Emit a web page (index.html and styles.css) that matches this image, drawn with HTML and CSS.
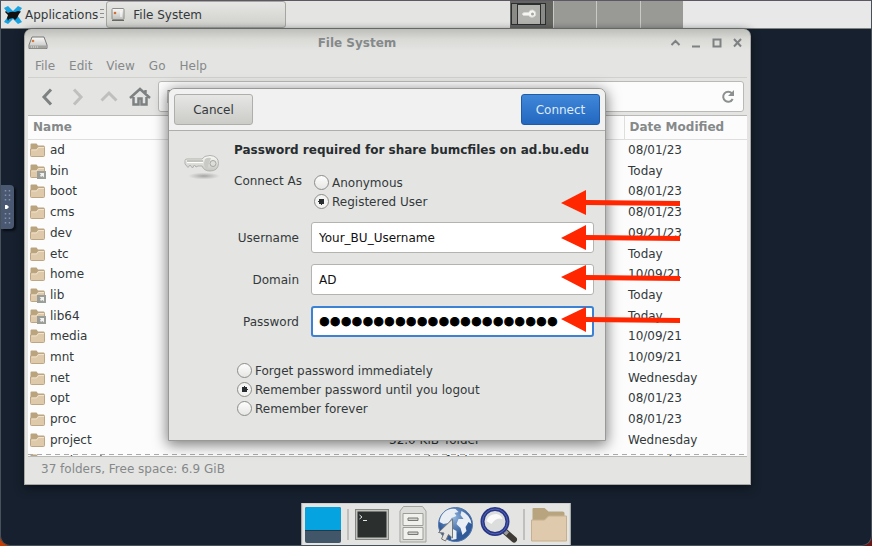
FILE: index.html
```html
<!DOCTYPE html>
<html lang="en">
<head>
<meta charset="utf-8">
<title>File System</title>
<link rel="stylesheet" href="styles.css">
</head>
<body>
<svg class="defs" width="0" height="0" aria-hidden="true">
  <defs>
    <linearGradient id="gDrive" x1="0" y1="0" x2="0" y2="1"><stop offset="0" stop-color="#fafafa"/><stop offset="1" stop-color="#bdbdba"/></linearGradient>
    <linearGradient id="gKey" x1="0" y1="0" x2="0" y2="1"><stop offset="0" stop-color="#fafaf8"/><stop offset="1" stop-color="#c4c4c0"/></linearGradient>
    <radialGradient id="gShade"><stop offset="0" stop-color="#777" stop-opacity=".6"/><stop offset="1" stop-color="#888" stop-opacity="0"/></radialGradient>
    <radialGradient id="gGlobe" cx=".45" cy=".3"><stop offset="0" stop-color="#8fb3dc"/><stop offset="1" stop-color="#315a99"/></radialGradient>
    <symbol id="folder" viewBox="0 0 16 16">
      <path d="M.5 13V2.500Q.5 1.500 1.500 1.500H6.500L8 3.500H13.500Q14.500 3.500 14.500 4.500V13Z" fill="#b9a47e"/>
      <path d="M.5 7H6L8 4.500H14Q14.500 4.500 14.500 5.500V13.500Q14.500 14.500 13.500 14.500H1.500Q.5 14.500 .5 13.500Z" fill="#dfc9ab" stroke="#bda684"/>
      <path d="M1.500 8H6.500L8.500 5.500H14" fill="none" stroke="#f0e2cc"/>
    </symbol>
    <symbol id="linked" viewBox="0 0 16 16">
      <use href="#folder" width="16" height="16"/>
      <rect x="7" y="8" width="9" height="8" fill="#9b9d98"/>
      <path d="M9.500 10H14V14.500L12.500 13L11 14L10 12.500L11 11.500Z" fill="#f1f1ef"/>
    </symbol>
    <symbol id="drive" viewBox="0 0 20 14">
      <path d="M4 1H16L19 9V12.500H1V9Z" fill="url(#gDrive)" stroke="#777975"/>
      <path d="M1.500 9.500H18.500V12.500H1.500Z" fill="#a3a4a0"/>
      <path d="M3 11H11" stroke="#e4e4e4" stroke-dasharray="1 1"/>
      <circle cx="5" cy="5" r="1.300" fill="#d57a3a"/>
    </symbol>
  </defs>
</svg>

<div class="desktop">
  <header class="panel">
    <button class="apps" type="button">
      <svg class="apps-logo" width="20" height="20" viewBox="0 0 20 20">
        <path d="M1 3L5 1L10 6L15 1L19 3L14 10L19 17L15 19L10 14L5 19L1 17L6 10Z" fill="#16a3e0"/>
        <path d="M3 6L5 8Q8 6 12 7L15 6L18 6.500L16 9L14 13L12 15L10 13L6 14L5 16L4 13L5 10L2 7Z" fill="#111"/>
      </svg>
      <span>Applications</span>
    </button>
    <span class="grip"></span>
    <button class="task" type="button">
      <svg width="14" height="14" viewBox="0 0 14 14"><rect x="1" y=".5" width="12" height="11" rx="1" fill="url(#gDrive)" stroke="#8c8c88"/><path d="M1 12.500H13" stroke="#666"/><path d="M10 3V9" stroke="#fff"/><circle cx="4" cy="5" r="1.300" fill="#cf6f36"/></svg>
      <span>File System</span>
    </button>
    <span class="fill"></span>
    <div class="pager">
      <span class="space current">
        <svg width="38" height="27" viewBox="0 0 38 27">
          <rect x="1.500" y="2.500" width="34" height="21" fill="#8a8a86" stroke="#2c2f31"/>
          <rect x="7.500" y="3.500" width="23" height="20" fill="#b2b2ae" stroke="#2c2f31"/>
          <path d="M12 13L14 11.500H18.500Q20 8.500 22.500 9Q26.500 10 25.500 14.500Q22 18 18.500 14.500L13.500 14.500Z" fill="#f5f5f2" stroke="#d9d9d5"/>
          <circle cx="22.500" cy="13" r="1.500" fill="#a5a5a0"/>
        </svg>
      </span>
      <span class="space"></span><span class="space"></span><span class="space"></span>
    </div>
    <span class="tray"></span>
  </header>

  <section class="window">
    <div class="titlebar">
      <svg width="20" height="14"><use href="#drive" width="20" height="14"/></svg>
      <h1>File System</h1>
      <svg class="controls" width="72" height="12" viewBox="0 0 72 12" fill="none" stroke="#7d8182" stroke-width="2">
        <path d="M1.500 8L5.500 4L9.500 8M22 9.500H30M43.500 2.500H50.500V9.500H43.500ZM64 2L71 9.500M71 2L64 9.500"/>
      </svg>
    </div>
    <nav class="menubar">
      <button type="button">File</button><button type="button">Edit</button><button type="button">View</button><button type="button">Go</button><button type="button">Help</button>
    </nav>
    <div class="toolbar">
      <button type="button" aria-label="Back"><svg width="22" height="20" viewBox="0 0 22 20"><path d="M15 2.500L8 10L15 17.500" fill="none" stroke="#7d8182" stroke-width="3"/></svg></button>
      <button type="button" aria-label="Forward"><svg width="22" height="20" viewBox="0 0 22 20"><path d="M7 2.500L14 10L7 17.500" fill="none" stroke="#bfc0bd" stroke-width="3"/></svg></button>
      <button type="button" aria-label="Up"><svg width="22" height="20" viewBox="0 0 22 20"><path d="M3.500 13.500L11 6L18.500 13.500" fill="none" stroke="#bfc0bd" stroke-width="3"/></svg></button>
      <button type="button" aria-label="Home"><svg width="22" height="20" viewBox="0 0 22 20"><path d="M1 11L11 2L21 11M16.500 3V7M4.500 10V17.500H9.500V11.500H12.500V17.500H17.500V10" fill="none" stroke="#7d8182" stroke-width="2.500"/></svg></button>
      <div class="location">
        <svg width="14" height="14" viewBox="0 0 14 14"><rect x="1" y=".5" width="12" height="12" fill="url(#gDrive)" stroke="#8c8c88"/></svg>
        <svg width="14" height="14" viewBox="0 0 14 14"><path d="M11 3.500A5 5 0 1 0 11.700 9" fill="none" stroke="#8d9090" stroke-width="2"/><path d="M13 0V6H7Z" fill="#8d9090"/></svg>
      </div>
    </div>
    <div class="list">
      <table>
        <colgroup><col class="c-name"><col class="c-size"><col class="c-type"><col class="c-date"></colgroup>
        <thead><tr><th>Name</th><td></td><td></td><th>Date Modified</th></tr></thead>
        <tbody>
          <tr><td><span class="file"><svg><use href="#folder"/></svg>ad</span></td><td></td><td></td><td>08/01/23</td></tr>
          <tr><td><span class="file"><svg><use href="#linked"/></svg>bin</span></td><td></td><td></td><td>Today</td></tr>
          <tr><td><span class="file"><svg><use href="#folder"/></svg>boot</span></td><td></td><td></td><td>08/01/23</td></tr>
          <tr><td><span class="file"><svg><use href="#folder"/></svg>cms</span></td><td></td><td></td><td>08/01/23</td></tr>
          <tr><td><span class="file"><svg><use href="#folder"/></svg>dev</span></td><td></td><td></td><td>09/21/23</td></tr>
          <tr><td><span class="file"><svg><use href="#folder"/></svg>etc</span></td><td></td><td></td><td>Today</td></tr>
          <tr><td><span class="file"><svg><use href="#folder"/></svg>home</span></td><td></td><td></td><td>10/09/21</td></tr>
          <tr><td><span class="file"><svg><use href="#linked"/></svg>lib</span></td><td></td><td></td><td>Today</td></tr>
          <tr><td><span class="file"><svg><use href="#linked"/></svg>lib64</span></td><td></td><td></td><td>Today</td></tr>
          <tr><td><span class="file"><svg><use href="#folder"/></svg>media</span></td><td></td><td></td><td>10/09/21</td></tr>
          <tr><td><span class="file"><svg><use href="#folder"/></svg>mnt</span></td><td></td><td></td><td>10/09/21</td></tr>
          <tr><td><span class="file"><svg><use href="#folder"/></svg>net</span></td><td></td><td></td><td>Wednesday</td></tr>
          <tr><td><span class="file"><svg><use href="#folder"/></svg>opt</span></td><td></td><td></td><td>08/01/23</td></tr>
          <tr><td><span class="file"><svg><use href="#folder"/></svg>proc</span></td><td></td><td></td><td>08/01/23</td></tr>
          <tr><td><span class="file"><svg><use href="#folder"/></svg>project</span></td><td>32.0 KiB</td><td>folder</td><td>Wednesday</td></tr>
          <tr><td><span class="file"><svg><use href="#folder"/></svg>projectnb</span></td><td>62.6 KiB</td><td>folder</td><td>Yesterday</td></tr>
        </tbody>
      </table>
    </div>
    <footer class="status">37 folders, Free space: 6.9 GiB</footer>
  </section>

  <form class="dialog">
    <div class="actions">
      <button class="btn" type="button">Cancel</button>
      <button class="btn primary" type="button">Connect</button>
    </div>
    <div class="content">
      <svg class="key" width="38" height="32" viewBox="0 0 38 32">
        <ellipse cx="21" cy="26" rx="16" ry="3.500" fill="url(#gShade)"/>
        <path d="M2 10.500Q2 9 4 9H19Q21 5.500 27 5.500Q35.500 6 35.500 13.500Q35 21 27 21Q21 21 19 16H15L13 17L11.500 15L9.500 18L7 15L5 17.500L2 14Z" fill="url(#gKey)" stroke="#b1b1ad"/>
        <path d="M4 11H20" stroke="#9f9f9b"/><path d="M4 12.500H20" stroke="#fff"/>
        <path d="M22 9Q25 7 28 8L24 19Q21 17 21 13Z" fill="#c9c9c5"/>
        <circle cx="30" cy="13.500" r="3" fill="#deded9" stroke="#a5a5a1"/>
      </svg>
      <div class="fields">
        <h2>Password required for share bumcfiles on ad.bu.edu</h2>
        <div class="grid">
          <span class="lbl top" id="as">Connect As</span>
          <div class="radios" role="radiogroup" aria-labelledby="as">
            <label><input type="radio" name="as">Anonymous</label>
            <label><input type="radio" name="as" checked>Registered User</label>
          </div>
          <label class="lbl" for="user">Username</label>
          <input class="text" id="user" type="text" value="Your_BU_Username">
          <label class="lbl" for="domain">Domain</label>
          <input class="text" id="domain" type="text" value="AD">
          <label class="lbl" for="pass">Password</label>
          <input class="text focus" id="pass" type="password" value="0123456789012345678901">
        </div>
        <div class="radios keep">
          <label><input type="radio" name="keep">Forget password immediately</label>
          <label><input type="radio" name="keep" checked>Remember password until you logout</label>
          <label><input type="radio" name="keep">Remember forever</label>
        </div>
      </div>
    </div>
  </form>

  <svg class="arrows" width="120" height="144" viewBox="0 0 120 144" fill="#ff2600">
    <path d="M0 13L25 0V10L119 11V16L25 15V25Z"/>
    <path d="M0 48L25 35V45L119 46V51L25 50V60Z"/>
    <path d="M0 87L25 75V85L119 86V91L25 90V100Z"/>
    <path d="M0 129L25 117V127L119 128V133L25 132V142Z"/>
  </svg>

  <button class="handle" type="button" aria-label="Open control bar">
    <svg width="10" height="36" viewBox="0 0 10 36"><path d="M2.500 1V13M6.500 1V13M2.500 24V36M6.500 24V36" stroke="#8592aa" stroke-width="1.500" stroke-dasharray="1.500 3"/><path d="M2 16H4L6 18L4 20H2Z" fill="#fff"/></svg>
  </button>

  <nav class="dock">
    <svg width="37" height="38" viewBox="0 0 37 38"><rect x=".5" y="1" width="36" height="36" rx="2" fill="#42566a"/><path d="M.5 24V3Q.5 1 2.500 1H34.500Q36.500 1 36.500 3V24Z" fill="#05a3df"/><path d="M.5 24.500H36.500" stroke="#22394a"/></svg>
    <i></i>
    <svg width="35" height="38" viewBox="0 0 35 38"><rect x="1" y="3.500" width="33" height="30" fill="#c1c2be" stroke="#858782"/><rect x="3" y="5.500" width="29" height="26" fill="#2b302f"/><path d="M5 9L7.500 11L5 13M8.500 14.500H12.500" fill="none" stroke="#e2e4df"/></svg>
    <svg width="35" height="38" viewBox="0 0 35 38"><path d="M4.500 5L8 .5H27L30.500 5V36H4.500Z" fill="#dcdcd9" stroke="#a3a39f"/><path d="M7.500 7.500H27.500V19.500H7.500ZM7.500 21.500H27.500V33.500H7.500Z" fill="#f0f0ed" stroke="#9c9c98"/><path d="M12.500 12H22.500V14.500H12.500ZM12.500 26H22.500V28.500H12.500Z" fill="#d0d0cc" stroke="#777975"/></svg>
    <svg width="37" height="38" viewBox="0 0 37 38"><circle cx="19" cy="18.500" r="17" fill="url(#gGlobe)" stroke="#5378ad"/><path d="M7 7Q12 2 19 3L22 6L18 7L20 10L15 12L12 17L7 18L3 16Q4 10 7 7ZM25 5Q34 9 35 18L32 16L29 21L30 25L26 29L24 22L20 18L22 13L27 13L24 9ZM13 21L20 25L20 33L15 34Z" fill="#e9eef4"/><path d="M16 13V32L12 28.500L9 35L5 33L7.500 27L2 26.500Z" fill="#e3e3e1" stroke="#777"/></svg>
    <svg width="38" height="38" viewBox="0 0 38 38"><path d="M26 26L34.500 33.500" stroke="#3e3b36" stroke-width="6" stroke-linecap="round"/><path d="M24 24L28 28" stroke="#999" stroke-width="4"/><circle cx="15.500" cy="15.500" r="12.500" fill="#dcdedd" stroke="#293684" stroke-width="4"/><circle cx="15.500" cy="15.500" r="12.500" fill="none" stroke="#5365ba"/><path d="M7 15Q9 8 17 8Q22 9 23 13Q17 11 12 18Z" fill="#fafafa"/></svg>
    <i></i>
    <svg width="37" height="38" viewBox="0 0 37 38"><path d="M2 17V3Q2 2 3 2H14L18 5.500H32Q34 5.500 34 7V17Z" fill="#b8a57f"/><path d="M1 14H14L18 10H36V35H1Z" fill="#dfcaae" stroke="#c7b08c"/></svg>
  </nav>
</div>
</body>
</html>
```
FILE: styles.css
```css
* { box-sizing: border-box; }

html, body { height: 100%; }

body {
  margin: 0;
  background: linear-gradient(90deg, #c43c00 50%, #6b1414 50%);
  font: 12px/16px "DejaVu Sans", sans-serif;
  color: #33393b;
  overflow: hidden;
}

button, input { font: inherit; color: inherit; margin: 0; }
button { padding: 0; border: 0; background: none; }
svg { flex: none; display: block; }
.defs { position: absolute; }

.desktop {
  position: relative;
  height: 100%;
  background: #17202e;
  border: 1px solid #46515c;
  border-top: 0;
  border-radius: 0 0 10px 10px;
  overflow: hidden;
}

/* Top panel */
.panel {
  display: flex;
  height: 29px;
  background: #e4e4e2;
  border-top: 1px solid #5c5763;
  border-bottom: 1px solid #7f837d;
  align-items: stretch;
}
.apps { display: flex; align-items: center; gap: 2px; padding-left: 2px; }
.grip {
  width: 4px;
  height: 11px;
  margin: 8px 2px 0 2px;
  background: repeating-linear-gradient(#8d8f8c 0 1px, transparent 1px 4px);
}
.task {
  display: flex;
  align-items: center;
  gap: 8px;
  width: 180px;
  padding: 0 4px;
  border: 1px solid #a5a6a1;
  border-radius: 3px;
  background: linear-gradient(#e6e6e4, #cfcfcb);
}
.fill { width: 224px; }
.pager { display: flex; gap: 1px; width: 173px; background: #c9c9c5; }
.space { flex: 1 1 0; min-width: 0; background: #999995; }
.space.current { background: #646460; }
.tray { flex: 1; background: #e8e8e8; }

/* File manager */
.window {
  position: absolute;
  left: 23px;
  right: 120px;
  top: 29px;
  bottom: 60px;
  display: flex;
  flex-direction: column;
  padding: 0 3px;
  border: 1px solid #a7a8a4;
  border-top: 0;
  border-radius: 7px 7px 0 0;
  background: linear-gradient(#bdbdb9, #d9d9d6 10px, #e4e4e2 22px);
  box-shadow: 0 3px 10px #0b131b;
  color: #85898a;
}
.titlebar { display: flex; align-items: center; height: 27px; }
.titlebar h1 { flex: 1; margin: 0; padding-right: 4px; font-size: 12px; text-align: center; }
.controls { margin-right: 5px; }
.menubar { display: flex; gap: 14px; height: 22px; padding-left: 7px; border-bottom: 1px solid #d0d0cd; }
.menubar button { height: 20px; }
.toolbar { display: flex; align-items: center; height: 38px; padding: 0 3px 0 8px; border-bottom: 1px solid #b9bab6; }
.toolbar button { width: 31px; }
.location {
  flex: 1;
  display: flex;
  align-items: center;
  justify-content: space-between;
  height: 31px;
  margin-left: -2px;
  padding: 0 8px;
  border: 1px solid #b9bab6;
  border-radius: 3px;
  background: #fcfcfc;
}
.list { flex: 1; min-height: 0; overflow: hidden; position: relative; background: #fcfcfc; border-bottom: 1px solid #b9bab6; }
.list::after {
  content: "";
  position: absolute;
  inset: auto 0 1px 0;
  height: 1px;
  background: repeating-linear-gradient(90deg, #aaa 0 5px, transparent 5px 9px);
}
table { width: 100%; height: 355px; table-layout: fixed; border-collapse: collapse; color: #33393b; }
.c-name { width: 361px; }
.c-size { width: 56px; }
.c-date { width: 123px; }
th, td { padding: 0; white-space: nowrap; }
thead tr { height: 23px; }
thead > tr > * { border-bottom: 1px solid #dededc; }
th { padding-left: 5px; text-align: left; color: #85898a; }
th:last-child { border-left: 1px solid #dededc; }
td:last-child { padding-left: 4px; }
.file { display: flex; align-items: center; gap: 4px; padding-left: 2px; }
.file svg { width: 16px; height: 16px; }
.status { height: 27px; padding: 4px 13px; }

/* Password dialog */
.dialog {
  position: absolute;
  left: 167px;
  top: 88px;
  border: 1px solid #999a97;
  border-radius: 7px 7px 0 0;
  background: #e4e4e2;
  box-shadow: 0 3px 14px 1px rgba(0, 0, 0, .5);
}
.actions {
  display: flex;
  justify-content: space-between;
  padding: 5px;
  height: 42px;
  border-bottom: 1px solid #aeafab;
  border-radius: 6px 6px 0 0;
  background: #f1f1f1;
}
.btn {
  width: 79px;
  height: 31px;
  border: 1px solid #aeafab;
  border-radius: 3px;
  background: linear-gradient(#e6e6e4, #cbcbc8);
}
.primary { border-color: #1f5ba6; background: linear-gradient(#4087d9, #2268c0); color: #dfeaf7; }
.content { display: flex; gap: 13px; padding: 11px 11px 22px 14px; }
.key { margin-top: 8px; }
.fields { min-width: 360px; }
h2 { margin: 0; font-size: 12px; color: #282d30; }
.grid { display: grid; grid-template-columns: 65px 1fr; column-gap: 12px; row-gap: 11px; margin-top: 15px; align-items: center; }
.lbl { text-align: right; white-space: nowrap; }
.lbl.top { align-self: start; }
.radios { padding-left: 3px; }
.radios label { display: flex; align-items: center; gap: 3px; height: 19px; }
.radios input {
  appearance: none;
  width: 15px;
  height: 15px;
  border: 1px solid #8c8e89;
  border-radius: 50%;
  background: linear-gradient(#fdfdfd, #e6e6e4);
}
.radios input:checked { background: radial-gradient(circle, #282d30 3px, #f3f3f2 3px); }
.text {
  width: 0;
  min-width: 100%;
  height: 31px;
  padding: 0 7px;
  border: 1px solid #b3b4af;
  border-radius: 3px;
  background: #fff;
  color: #111;
  outline: 0;
}
.focus { border: 2px solid #3c82d4; padding: 0 6px; }
#pass { font: 31px/27px "Liberation Sans", sans-serif; color: #000; -webkit-text-stroke: 1px #000; }
.keep { margin-top: 24px; }

/* Callout arrows */
.arrows { position: absolute; left: 560px; top: 190px; }

/* Side handle */
.handle {
  position: absolute;
  left: 0;
  top: 185px;
  width: 13px;
  height: 44px;
  display: flex;
  align-items: center;
  justify-content: center;
  border-radius: 0 4px 4px 0;
  background: #4a5872;
  box-shadow: 2px 2px 2px #080d14;
}

/* Dock */
.dock {
  position: absolute;
  left: 50%;
  bottom: -1px;
  transform: translateX(-50%);
  display: flex;
  align-items: center;
  gap: 6px;
  height: 43px;
  padding: 0 2px;
  border: 1px solid #cfcfcb;
  background: #e4e4e2;
}
.dock i { width: 1px; height: 31px; background: #999a97; }
```
